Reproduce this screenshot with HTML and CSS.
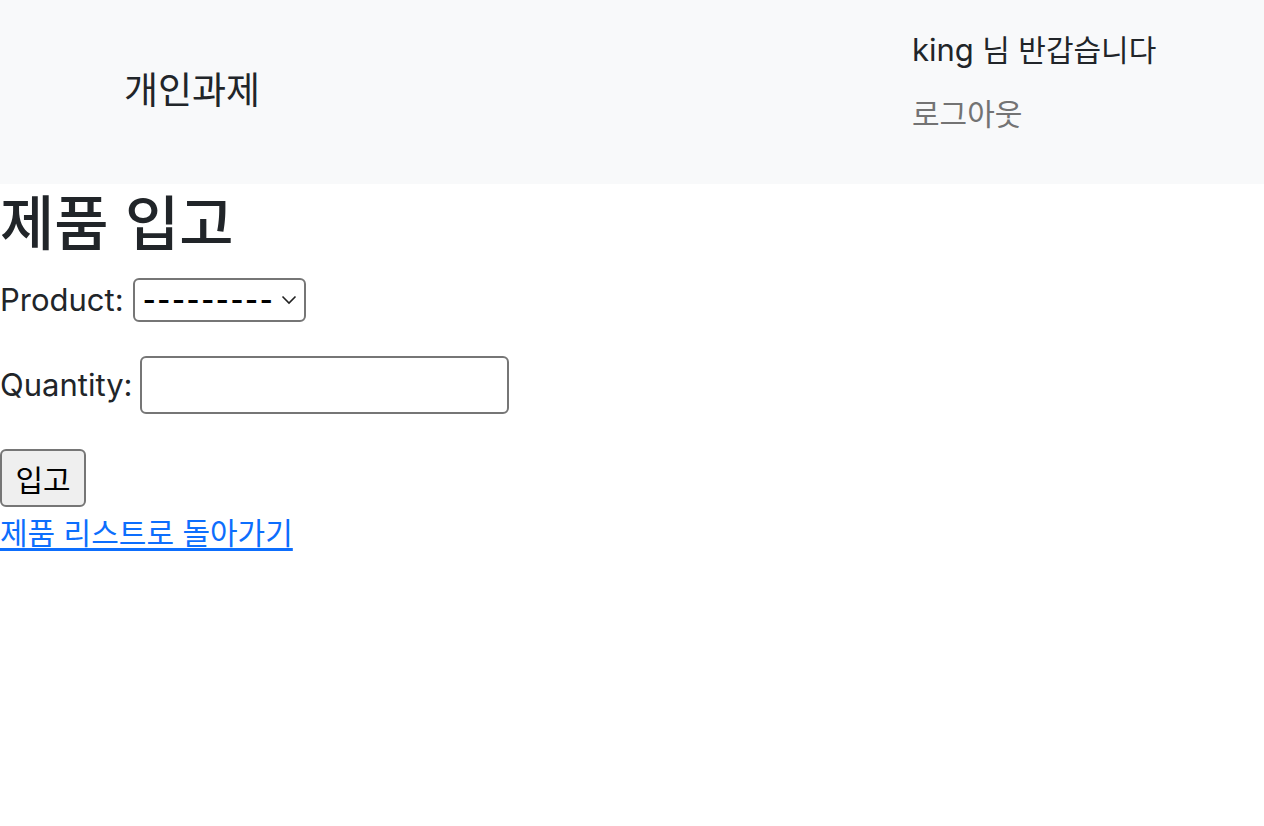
FILE: index.html
```html
<!DOCTYPE html>
<html lang="ko">
<head>
<meta charset="utf-8">
<title>제품 입고</title>
<link rel="stylesheet" href="styles.css">
</head>
<body>
<nav class="navbar">
  <div class="nav-inner">
    <a class="brand" href="#">개인과제</a>
    <ul class="nav-list">
      <li class="nav-item"><span class="latin">king</span> <span class="ko">님 반갑습니다</span></li>
      <li class="nav-item"><a class="nav-link ko" href="#">로그아웃</a></li>
    </ul>
  </div>
</nav>
<main class="page">
  <h1 class="title">제품 입고</h1>
  <form class="form">
    <div class="field field-product">
      <label class="label" for="product">Product:</label>
      <div class="select-wrap">
        <select id="product" class="select">
          <option>---------</option>
        </select>
        <svg class="chevron" width="16" height="10" viewBox="0 0 16 10"><path d="M1.5 1.5 L8 8 L14.5 1.5" fill="none" stroke="#222" stroke-width="1.6"/></svg>
      </div>
    </div>
    <div class="field field-qty">
      <label class="label" for="qty">Quantity:</label>
      <input id="qty" class="input" type="number">
    </div>
    <div class="field field-btn">
      <button type="submit" class="btn">입고</button>
    </div>
  </form>
  <a class="back" href="#">제품 리스트로 돌아가기</a>
</main>
</body>
</html>
```

FILE: styles.css
```css
* { box-sizing: border-box; }

body {
  margin: 0;
  font-family: Inter, "Noto Sans CJK KR", sans-serif;
  color: #212529;
  background: #fff;
}

.latin { font-family: Inter, sans-serif; font-size: 31px; }
.ko { font-family: "Noto Sans CJK KR", sans-serif; }

.navbar {
  background: #f8f9fa;
  height: 184px;
}

.nav-inner {
  display: grid;
  grid-template-columns: 788px auto;
  padding-left: 124px;
  padding-top: 16px;
}

.brand {
  font-family: "Noto Sans CJK KR", sans-serif;
  font-size: 37px;
  line-height: 64px;
  margin-top: 40px;
  color: #212529;
  text-decoration: none;
  align-self: start;
}

.nav-list {
  list-style: none;
  margin: 0;
  padding: 0;
  display: flex;
  flex-direction: column;
}

.nav-item {
  height: 64px;
  line-height: 64px;
  font-size: 30px;
  white-space: nowrap;
  color: #212529;
}

.nav-item .ko { font-size: 30px; }

.nav-link {
  color: #737373;
  text-decoration: none;
  font-size: 30px;
}

.page { display: flex; flex-direction: column; align-items: flex-start; }

.title {
  margin: 0 0 20px;
  font-family: "Noto Sans CJK KR", sans-serif;
  font-size: 59px;
  font-weight: 500;
  line-height: 72px;
  color: #212529;
}

.form { display: flex; flex-direction: column; }

.field {
  display: flex;
  align-items: center;
  gap: 9px;
}

.field-product { height: 48px; }
.field-qty { height: 58px; margin-top: 32px; gap: 7px; }
.field-btn { height: 58px; margin-top: 35px; }

.label {
  font-family: Inter, sans-serif;
  font-size: 31px;
  line-height: 48px;
  color: #212529;
}

.select-wrap {
  position: relative;
  width: 173px;
  height: 44px;
}

.select {
  appearance: none;
  -webkit-appearance: none;
  width: 100%;
  height: 100%;
  border: 2px solid #767676;
  border-radius: 6px;
  background: #fff;
  font-family: Inter, sans-serif;
  font-size: 28px;
  font-weight: 600;
  color: #000;
  padding: 0 0 0 8px;
  letter-spacing: 1.6px;
}

.chevron {
  position: absolute;
  right: 9px;
  top: 17px;
  pointer-events: none;
}

.input {
  width: 369px;
  height: 58px;
  border: 2px solid #767676;
  border-radius: 6px;
  background: #fff;
  font-size: 27px;
}

.btn {
  width: 86px;
  height: 58px;
  border: 2px solid #767676;
  border-radius: 6px;
  background: #efefef;
  font-family: "Noto Sans CJK KR", sans-serif;
  font-size: 30px;
  color: #000;
  padding: 0;
}

.back {
  font-family: "Noto Sans CJK KR", sans-serif;
  font-size: 30px;
  line-height: 48px;
  color: #0d6efd;
  text-decoration: underline;
  text-underline-offset: 4px;
}
```
